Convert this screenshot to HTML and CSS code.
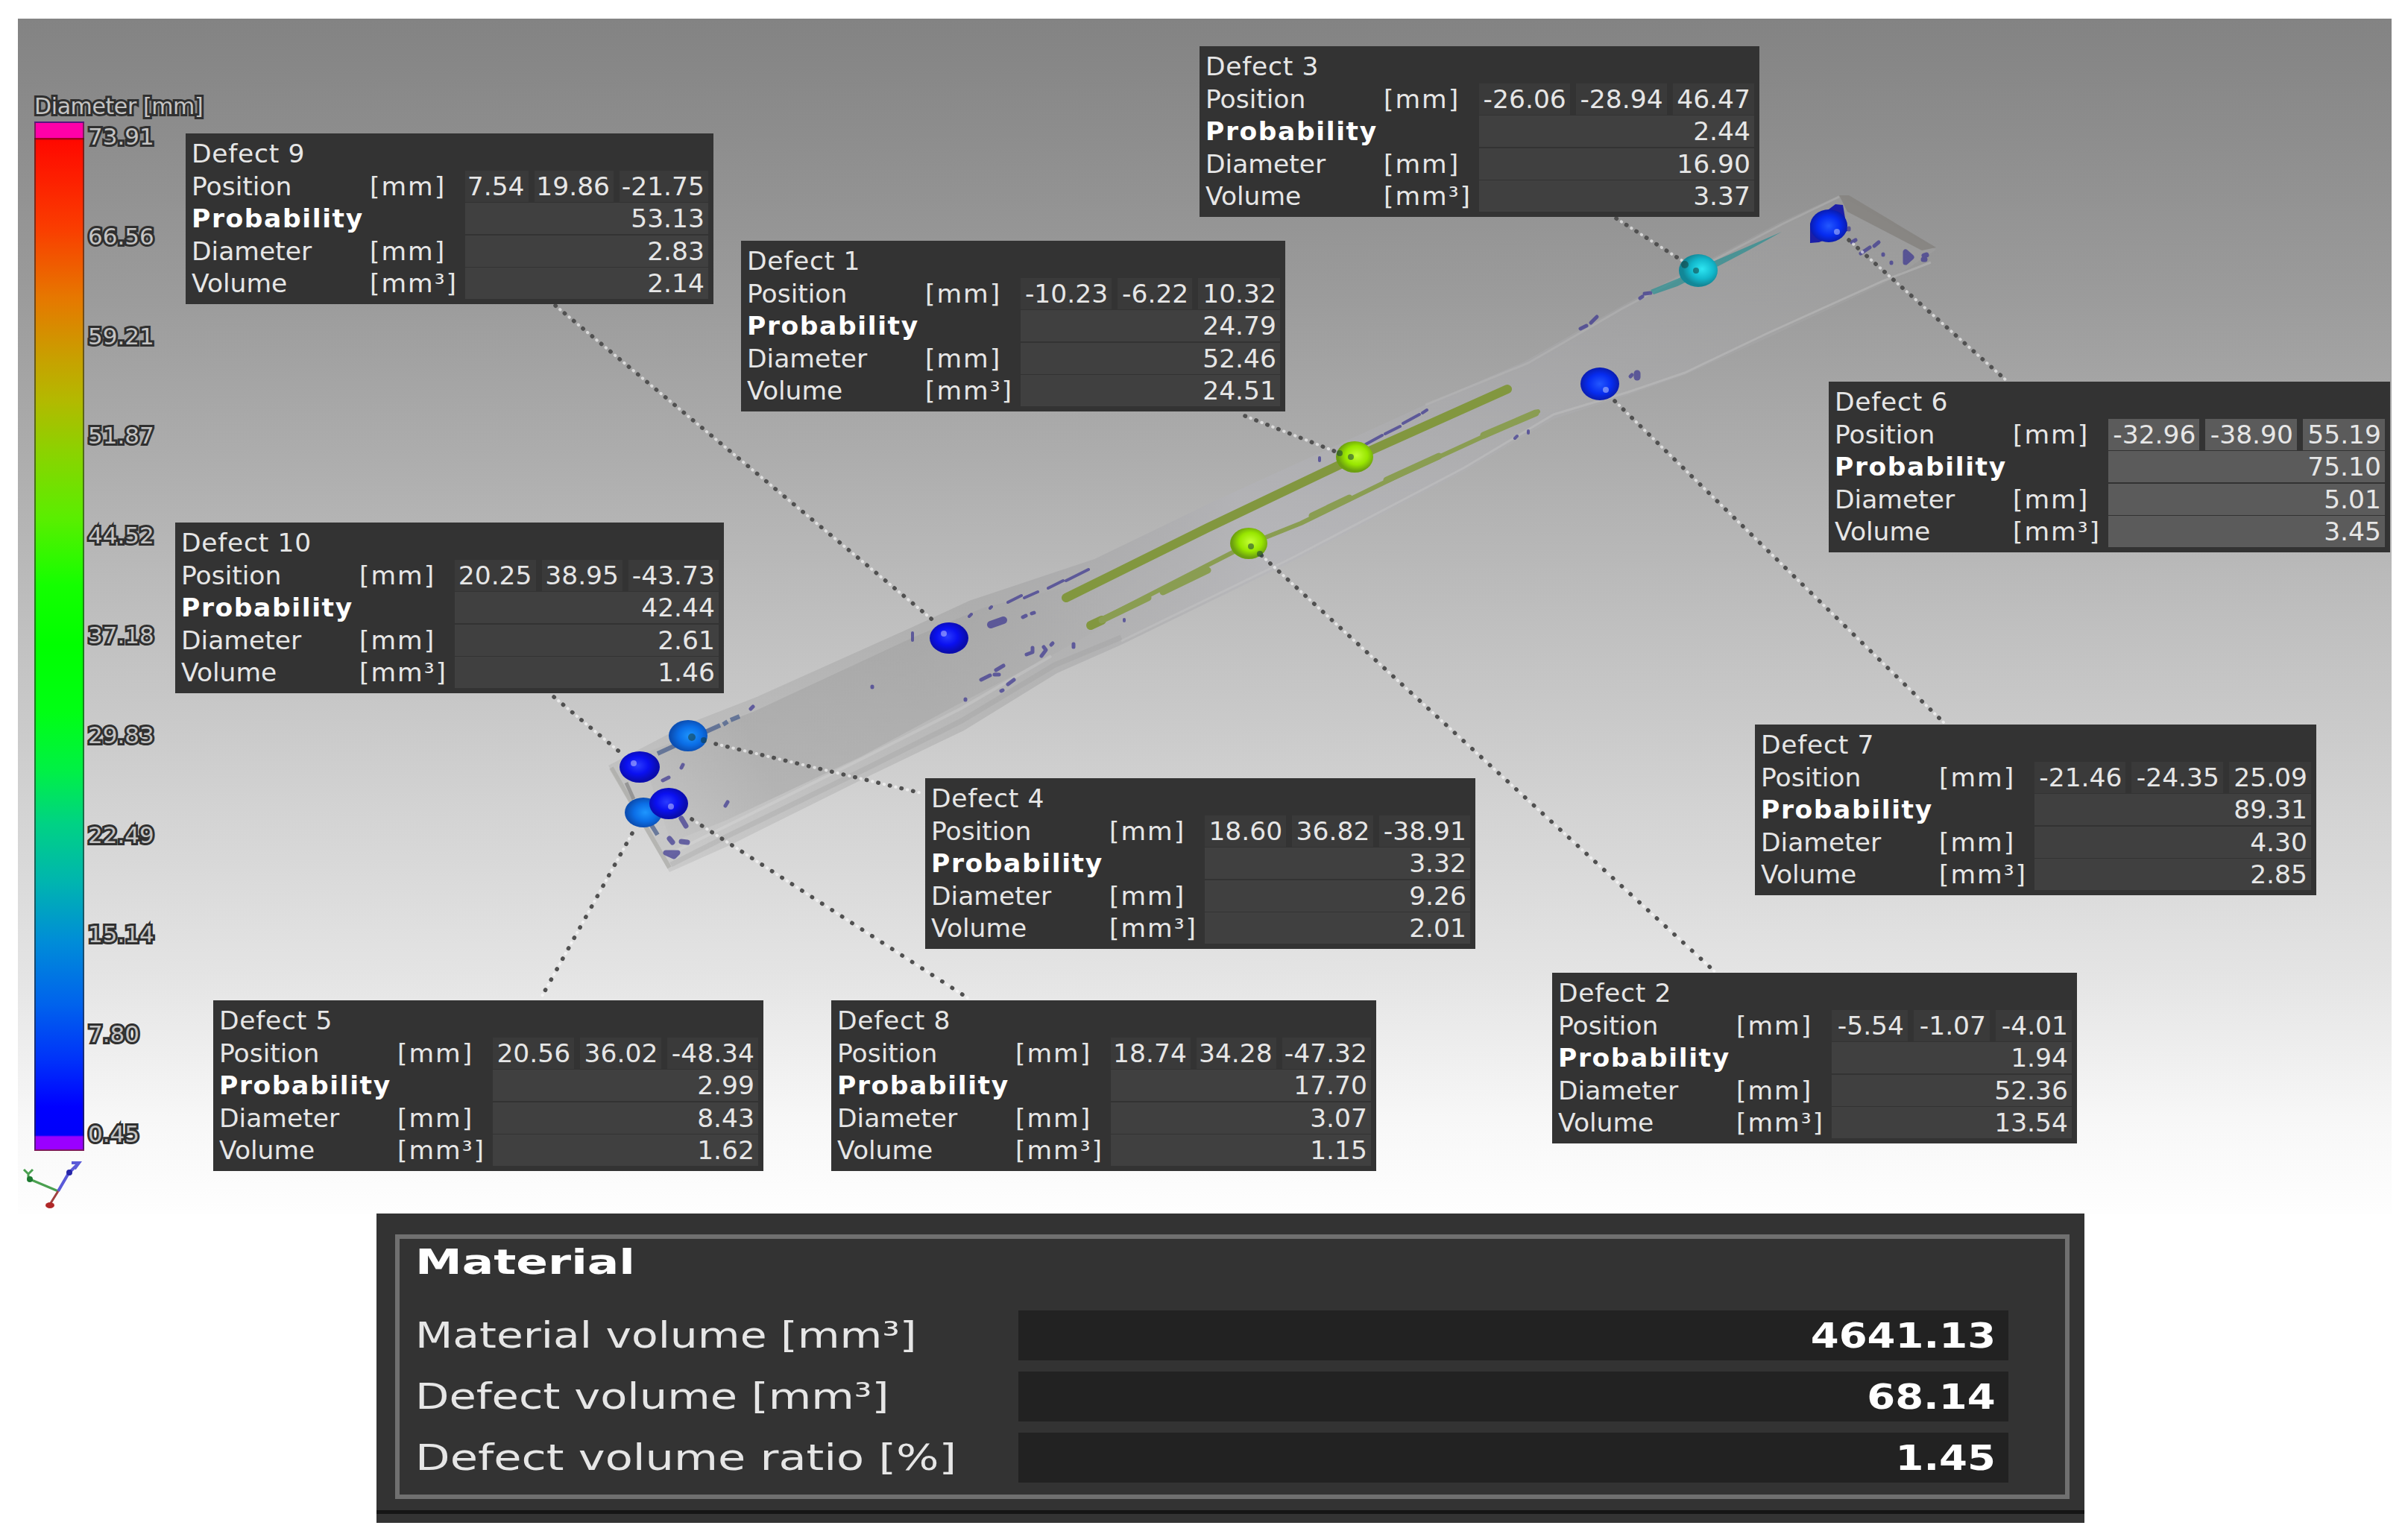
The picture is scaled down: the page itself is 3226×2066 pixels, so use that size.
FILE: index.html
```html
<!DOCTYPE html>
<html lang="en">
<head>
    <meta charset="UTF-8">
    <title>Defect Analysis</title>
    <link rel="stylesheet" href="styles.css">
</head>
<body>
    <div class="viewport">
        <!-- 3D scene -->
        <svg class="scene" viewBox="24 25 3184 1603">
            <defs>
                <linearGradient id="body" gradientUnits="userSpaceOnUse" x1="850" y1="1100" x2="2500" y2="300">
                    <stop offset="0" stop-color="#777" stop-opacity="0.15"/>
                    <stop offset="0.28" stop-color="#777" stop-opacity="0.22"/>
                    <stop offset="0.5" stop-color="#b4b4bc" stop-opacity="0.4"/>
                    <stop offset="1" stop-color="#aaa" stop-opacity="0.25"/>
                </linearGradient>
                <linearGradient id="inner" gradientUnits="userSpaceOnUse" x1="860" y1="1080" x2="1480" y2="790">
                    <stop offset="0" stop-color="#666" stop-opacity="0.02"/>
                    <stop offset="0.25" stop-color="#666" stop-opacity="0.15"/>
                    <stop offset="0.6" stop-color="#666" stop-opacity="0.12"/>
                    <stop offset="1" stop-color="#666" stop-opacity="0"/>
                </linearGradient>
                <radialGradient id="blue" cx="0.45" cy="0.45"><stop offset="0" stop-color="#2a3cff"/><stop offset="0.55" stop-color="#0a10f0"/><stop offset="1" stop-color="#0a0cae"/></radialGradient>
                <radialGradient id="royal" cx="0.5" cy="0.5"><stop offset="0" stop-color="#2358ff"/><stop offset="0.6" stop-color="#062cf0"/><stop offset="1" stop-color="#0a1cb0"/></radialGradient>
                <radialGradient id="sky" cx="0.55" cy="0.5"><stop offset="0" stop-color="#1e96ff"/><stop offset="0.6" stop-color="#0b6ee6"/><stop offset="1" stop-color="#0b4fb4"/></radialGradient>
                <radialGradient id="cyan" cx="0.6" cy="0.45"><stop offset="0" stop-color="#2ee6f2"/><stop offset="0.6" stop-color="#12b8cc"/><stop offset="1" stop-color="#128797"/></radialGradient>
                <radialGradient id="lime" cx="0.55" cy="0.45"><stop offset="0" stop-color="#c4ff35"/><stop offset="0.6" stop-color="#98e600"/><stop offset="1" stop-color="#6c9f10"/></radialGradient>
            </defs>

            <path fill="url(#body)" d="M816 1027 L925 970 L1015 935 L1220 843 L1300 806 L1468 750 L1627 673 L1912 543 L2045 485 L2176 410 L2390 297 L2467 262 L2597 335 L2528 380 L2371 453 L2260 503 L2184 530 L2084 562 L1963 633 L1734 753 L1504 865 L1418 903 L1293 980 L1168 1040 L981 1133 L898 1170 Z"/>
            <path fill="url(#inner)" d="M860 1012 L1010 955 L1225 855 L1320 815 L1480 775 L1500 830 L1400 885 L1285 945 L1155 1015 L975 1100 L900 1130 Z"/>
            <path fill="none" stroke="#999" stroke-opacity="0.25" stroke-width="7" d="M900 1160 L975 1122 L1168 1028 L1290 967 L1415 892 L1504 855"/>
            <path fill="none" stroke="#fff" stroke-opacity="0.14" stroke-width="4" d="M898 1146 L1160 1016 L1290 950 L1410 880"/>
            <path fill="none" stroke="#a2a29c" stroke-opacity="0.5" stroke-width="6" d="M820 1030 L898 1164"/>
            <path fill="none" stroke="#777" stroke-opacity="0.6" stroke-width="5" d="M840 1050 L850 1072"/>
            <path fill="none" stroke="#ccc" stroke-opacity="0.35" stroke-width="3" d="M1504 860 L1734 748 L1963 628 L2084 556 L2184 526 L2260 500 L2371 447 L2528 376 L2590 352"/>
            <path fill="none" stroke="#bbb" stroke-opacity="0.4" stroke-width="3" d="M1912 543 L2050 487 L2176 414 L2390 301 L2467 264"/>
            <path fill="#85837f" fill-opacity="0.85" d="M2467 262 L2480 262 L2597 332 L2578 336 L2478 284 Z"/>

            <!-- pores -->
            <g class="pores">
                <path d="M1224 859 v-10 M1300 827 l3 -3 M1328 816 l2 -2 M1352 808 l18 -9 M1374 802 l18 -8 M1406 789 l20 -10 M1430 779 l30 -15" stroke-width="4"/>
                <path d="M914 1030 l2 -4 M889 1047 l8 -4 M973 1081 l3 -5 M1170 921 v1 M1295 938 v1 M1343 927 l2 -1 M1007 951 l3 -3"/>
                <path d="M1372 828 l4 -2 M1384 823 l3 -1 M1377 878 l8 -3 l0 -6 M1397 880 l6 -8 l-3 -4 M1440 868 v-4 M1410 865 l2 -2"/>
                <path d="M1316 912 l12 -6 M1336 899 l10 -6 M1352 918 l8 -6 M1334 905 h6"/>
                <path d="M1832 596 l22 -12 M1858 582 l20 -10 M1882 568 l22 -12 M1908 554 l6 -4 M2032 588 l3 -3 M2050 581 v-3 M1508 833 v-2 M1770 618 v-4" stroke-width="4"/>
                <path d="M2120 441 l8 -4 M2134 433 l8 -8 M2200 400 l3 -2 M2206 394 l8 -1 M2187 505 l2 -2"/>
                <path d="M2196 501 v5" stroke-width="9"/>
                <path d="M1329 838 L1346 832" stroke-width="10"/>
                <path d="M2480 306 v2 M2484 325 l5 -3 M2496 340 l12 -8 M2514 330 l6 -5 M2526 341 v1 M2537 352 v1"/>
                <path d="M2556 338 v14 l8 -7 z M2581 343 l3 -1 M2580 348 h2" stroke-width="7"/>
                <path d="M898 1125 l4 5 M914 1129 l8 1 M893 1144 l16 0 l-5 5 z" stroke-width="7"/>
                <path d="M914 1098 l6 10" stroke-width="7"/>
            </g>
            <path class="streak" d="M872 1104 L882 1120 M882 1011 L906 1000 M946 982 L966 973 M970 972 L976 968 M980 966 L992 961"/>

            <!-- large voids -->
            <path class="void" stroke-width="12" d="M1430 802 L1620 708 L1817 614 L2022 522"/>
            <path class="void thin" stroke-width="6" d="M1464 838 L1675 730 L1745 702 L1880 636 L2063 552"/>
            <path class="void" stroke-width="12" d="M1463 839 L1478 832"/>
            <path class="void thin" stroke-width="9" d="M1478 832 L1540 802 M1560 794 L1620 765 M1760 692 L1810 668 M1860 644 L1930 612 M1990 584 L2060 554"/>
            <path fill="#2f8f92" fill-opacity="0.75" d="M2214 389 L2250 374 L2300 350 L2390 311 L2345 336 L2305 357 L2250 384 L2218 395 Z"/>

            <!-- leader lines -->
            <g class="leader-back">
                <path d="M745 410 L1255 835"/><path d="M743 935 L835 1012"/><path d="M960 998 L1240 1065"/>
                <path d="M848 1118 L725 1340"/><path d="M928 1099 L1303 1342"/><path d="M1670 558 L1797 608"/>
                <path d="M1692 745 L2303 1306"/><path d="M2168 293 L2260 352"/><path d="M2480 322 L2692 511"/><path d="M2166 538 L2609 971"/>
            </g>
            <g class="leader">
                <path d="M745 410 L1255 835"/><path d="M743 935 L835 1012"/><path d="M960 998 L1240 1065"/>
                <path d="M848 1118 L725 1340"/><path d="M928 1099 L1303 1342"/><path d="M1670 558 L1797 608"/>
                <path d="M1692 745 L2303 1306"/><path d="M2168 293 L2260 352"/><path d="M2480 322 L2692 511"/><path d="M2166 538 L2609 971"/>
            </g>

            <!-- defect markers -->
            <ellipse cx="1273" cy="856" rx="26" ry="21" fill="url(#blue)"/>
            <ellipse cx="923" cy="987" rx="26" ry="21" fill="url(#sky)"/>
            <ellipse cx="858" cy="1029" rx="27" ry="21" fill="url(#blue)"/>
            <ellipse cx="863" cy="1090" rx="25" ry="20" fill="url(#sky)"/>
            <ellipse cx="897" cy="1078" rx="26" ry="21" fill="url(#blue)"/>
            <ellipse cx="1817" cy="613" rx="25" ry="21" fill="url(#lime)"/>
            <ellipse cx="1675" cy="729" rx="25" ry="21" fill="url(#lime)"/>
            <ellipse cx="2278" cy="363" rx="26" ry="22" fill="url(#cyan)"/>
            <path fill="#1c1fa8" d="M2428 300 L2462 274 L2472 275 L2478 310 L2440 325 L2428 326 Z"/>
            <ellipse cx="2453" cy="303" rx="25" ry="22" fill="url(#royal)"/>
            <ellipse cx="2146" cy="515" rx="26" ry="22" fill="url(#royal)"/>
            <g fill="#fff" fill-opacity="0.4">
                <circle cx="1266" cy="850" r="4"/><circle cx="850" cy="1024" r="4"/><circle cx="900" cy="1082" r="4"/>
                <circle cx="2464" cy="311" r="4"/><circle cx="2154" cy="523" r="4"/>
            </g>
            <g fill="#163a3a" fill-opacity="0.55">
                <circle cx="1812" cy="613" r="4"/><circle cx="1678" cy="733" r="4"/><circle cx="928" cy="989" r="5"/><circle cx="944" cy="993" r="4"/>
                <circle cx="2275" cy="363" r="4"/><circle cx="2260" cy="355" r="5"/><circle cx="1797" cy="608" r="4"/><circle cx="1690" cy="743" r="4"/>
            </g>

            <!-- orientation triad -->
            <g fill="none" stroke-width="3">
                <path stroke="#4aa050" d="M78 1598 L40 1582 M32 1569 l6 6 l6 -6 M38 1575 v6"/>
                <path stroke="#5a5ad8" stroke-width="4" d="M78 1598 L92 1574 M94 1572 L104 1562 M96 1560 h10 l-6 8"/>
                <path stroke="#a04040" d="M78 1598 L68 1614"/>
            </g>
            <circle cx="40" cy="1582" r="4" fill="#1d7a30"/>
            <circle cx="93" cy="1573" r="4" fill="#2525a8"/>
            <ellipse cx="67" cy="1617" rx="6" ry="4" fill="#b02828"/>
        </svg>

        <div class="legend">
            <div class="legend-title">Diameter [mm]</div>
            <div class="legend-body">
                <div class="color-bar"></div>
                <div class="ticks">
                    <span>73.91</span><span>66.56</span><span>59.21</span><span>51.87</span><span>44.52</span><span>37.18</span><span>29.83</span><span>22.49</span><span>15.14</span><span>7.80</span><span>0.45</span>
                </div>
            </div>
        </div>

        <div class="card defect-9">
            <div class="name">Defect 9</div>
            <div class="row"><span>Position</span><span class="unit">[mm]</span><div class="xyz"><i>7.54</i><i>19.86</i><i>-21.75</i></div></div>
            <div class="row"><b>Probability</b><span></span><div class="val">53.13</div></div>
            <div class="row"><span>Diameter</span><span class="unit">[mm]</span><div class="val">2.83</div></div>
            <div class="row"><span>Volume</span><span class="unit">[mm³]</span><div class="val">2.14</div></div>
        </div>
        <div class="card defect-10">
            <div class="name">Defect 10</div>
            <div class="row"><span>Position</span><span class="unit">[mm]</span><div class="xyz"><i>20.25</i><i>38.95</i><i>-43.73</i></div></div>
            <div class="row"><b>Probability</b><span></span><div class="val">42.44</div></div>
            <div class="row"><span>Diameter</span><span class="unit">[mm]</span><div class="val">2.61</div></div>
            <div class="row"><span>Volume</span><span class="unit">[mm³]</span><div class="val">1.46</div></div>
        </div>
        <div class="card defect-3">
            <div class="name">Defect 3</div>
            <div class="row"><span>Position</span><span class="unit">[mm]</span><div class="xyz"><i>-26.06</i><i>-28.94</i><i>46.47</i></div></div>
            <div class="row"><b>Probability</b><span></span><div class="val">2.44</div></div>
            <div class="row"><span>Diameter</span><span class="unit">[mm]</span><div class="val">16.90</div></div>
            <div class="row"><span>Volume</span><span class="unit">[mm³]</span><div class="val">3.37</div></div>
        </div>
        <div class="card defect-1">
            <div class="name">Defect 1</div>
            <div class="row"><span>Position</span><span class="unit">[mm]</span><div class="xyz"><i>-10.23</i><i>-6.22</i><i>10.32</i></div></div>
            <div class="row"><b>Probability</b><span></span><div class="val">24.79</div></div>
            <div class="row"><span>Diameter</span><span class="unit">[mm]</span><div class="val">52.46</div></div>
            <div class="row"><span>Volume</span><span class="unit">[mm³]</span><div class="val">24.51</div></div>
        </div>
        <div class="card defect-6 active">
            <div class="name">Defect 6</div>
            <div class="row"><span>Position</span><span class="unit">[mm]</span><div class="xyz"><i>-32.96</i><i>-38.90</i><i>55.19</i></div></div>
            <div class="row"><b>Probability</b><span></span><div class="val">75.10</div></div>
            <div class="row"><span>Diameter</span><span class="unit">[mm]</span><div class="val">5.01</div></div>
            <div class="row"><span>Volume</span><span class="unit">[mm³]</span><div class="val">3.45</div></div>
        </div>
        <div class="card defect-7">
            <div class="name">Defect 7</div>
            <div class="row"><span>Position</span><span class="unit">[mm]</span><div class="xyz"><i>-21.46</i><i>-24.35</i><i>25.09</i></div></div>
            <div class="row"><b>Probability</b><span></span><div class="val">89.31</div></div>
            <div class="row"><span>Diameter</span><span class="unit">[mm]</span><div class="val">4.30</div></div>
            <div class="row"><span>Volume</span><span class="unit">[mm³]</span><div class="val">2.85</div></div>
        </div>
        <div class="card defect-4">
            <div class="name">Defect 4</div>
            <div class="row"><span>Position</span><span class="unit">[mm]</span><div class="xyz"><i>18.60</i><i>36.82</i><i>-38.91</i></div></div>
            <div class="row"><b>Probability</b><span></span><div class="val">3.32</div></div>
            <div class="row"><span>Diameter</span><span class="unit">[mm]</span><div class="val">9.26</div></div>
            <div class="row"><span>Volume</span><span class="unit">[mm³]</span><div class="val">2.01</div></div>
        </div>
        <div class="card defect-5">
            <div class="name">Defect 5</div>
            <div class="row"><span>Position</span><span class="unit">[mm]</span><div class="xyz"><i>20.56</i><i>36.02</i><i>-48.34</i></div></div>
            <div class="row"><b>Probability</b><span></span><div class="val">2.99</div></div>
            <div class="row"><span>Diameter</span><span class="unit">[mm]</span><div class="val">8.43</div></div>
            <div class="row"><span>Volume</span><span class="unit">[mm³]</span><div class="val">1.62</div></div>
        </div>
        <div class="card defect-8">
            <div class="name">Defect 8</div>
            <div class="row"><span>Position</span><span class="unit">[mm]</span><div class="xyz"><i>18.74</i><i>34.28</i><i>-47.32</i></div></div>
            <div class="row"><b>Probability</b><span></span><div class="val">17.70</div></div>
            <div class="row"><span>Diameter</span><span class="unit">[mm]</span><div class="val">3.07</div></div>
            <div class="row"><span>Volume</span><span class="unit">[mm³]</span><div class="val">1.15</div></div>
        </div>
        <div class="card defect-2">
            <div class="name">Defect 2</div>
            <div class="row"><span>Position</span><span class="unit">[mm]</span><div class="xyz"><i>-5.54</i><i>-1.07</i><i>-4.01</i></div></div>
            <div class="row"><b>Probability</b><span></span><div class="val">1.94</div></div>
            <div class="row"><span>Diameter</span><span class="unit">[mm]</span><div class="val">52.36</div></div>
            <div class="row"><span>Volume</span><span class="unit">[mm³]</span><div class="val">13.54</div></div>
        </div>
    </div>

    <div class="material">
        <div class="material-box">
            <h2><span>Material</span></h2>
            <div class="material-row"><label>Material volume [mm³]</label><div class="field"><span>4641.13</span></div></div>
            <div class="material-row"><label class="wide">Defect volume [mm³]</label><div class="field"><span>68.14</span></div></div>
            <div class="material-row"><label class="wider">Defect volume ratio [%]</label><div class="field"><span>1.45</span></div></div>
        </div>
    </div>
</body>
</html>
```
FILE: styles.css
```css
body {
    margin: 0;
    padding-top: 25px;
    background: #fff;
    font-family: "DejaVu Sans", Verdana, sans-serif;
    color: #e6e6e6;
}
.viewport {
    position: relative;
    width: 3184px;
    height: 1603px;
    margin-left: 24px;
    background: linear-gradient(#838383 0, #9b9b9b 23%, #b4b4b4 42%, #c6c6c6 56%, #d4d4d4 67%, #e4e4e4 80%, #f7f7f7 92%, #fefefe 100%);
}
.scene {
    position: absolute;
    left: 0;
    top: 0;
    width: 3184px;
    height: 1603px;
}
.pores {
    fill: none;
    stroke: #3a3590;
    stroke-width: 5;
    stroke-opacity: 0.7;
    stroke-linecap: round;
    stroke-linejoin: round;
}
.streak {
    fill: none;
    stroke: #4a5f8c;
    stroke-width: 6;
    stroke-opacity: 0.75;
}
.void {
    fill: none;
    stroke: #82973f;
    stroke-linecap: round;
    stroke-linejoin: round;
}
.void.thin {
    stroke: #8a9d52;
}
.leader-back {
    fill: none;
    stroke: #fff;
    stroke-opacity: 0.6;
    stroke-width: 4;
    stroke-linecap: round;
    stroke-dasharray: 0.5 15.5;
    stroke-dashoffset: -8;
}
.leader {
    fill: none;
    stroke: #505050;
    stroke-width: 5.5;
    stroke-linecap: round;
    stroke-dasharray: 0.5 15.5;
}

/* Color scale */
.legend {
    position: relative;
    width: 260px;
    padding: 98px 0 0 22px;
    font-size: 31px;
    color: #c4c4c4;
    -webkit-text-stroke: 6px #303030;
    paint-order: stroke fill;
}
.legend-title {
    height: 40px;
    line-height: 40px;
    font-size: 30px;
    letter-spacing: -0.4px;
    white-space: nowrap;
}
.legend-body {
    display: flex;
    gap: 5px;
}
.color-bar {
    box-sizing: border-box;
    width: 67px;
    height: 1381px;
    border: 2px solid rgba(40, 40, 40, 0.6);
    background: linear-gradient(#ff00a8 0 20px, #a00020 20px 22px, #ff0800 23px, #fa3c00 140px, #e67800 235px, #c8a000 315px, #b4b800 370px, #8cd200 440px, #5aee00 530px, #14ff00 620px, #00ff00 700px, #00ff14 790px, #00f046 870px, #00d284 940px, #00b4b0 1020px, #008cd8 1100px, #0064ec 1180px, #0030fa 1260px, #0000ff 1320px, #0000fa 1358px, #9a00ff 1360px);
}
.ticks {
    display: flex;
    flex-direction: column;
    height: 1374px;
}
.ticks span {
    height: 40px;
    line-height: 40px;
    margin-bottom: 93.8px;
}

/* Defect cards */
.card {
    position: absolute;
    box-sizing: border-box;
    height: 229px;
    padding: 6px 7px 0 8px;
    background: #333;
    font-size: 34.5px;
    line-height: 42px;
    white-space: nowrap;
}
.name {
    height: 43.5px;
    letter-spacing: 0.7px;
}
.row {
    display: grid;
    grid-template-columns: 239px 128px 1fr;
    height: 43.5px;
}
.row b {
    color: #fff;
    letter-spacing: 1.6px;
}
.unit {
    letter-spacing: 2px;
}
.xyz {
    display: flex;
    justify-content: space-between;
    gap: 8px;
}
.xyz i {
    flex: 1 1 auto;
    height: 42px;
    padding-right: 5px;
    background: #3a3a3a;
    font-style: normal;
    text-align: right;
}
.val {
    height: 42px;
    padding-right: 5px;
    background: #404040;
    text-align: right;
}
.active .val,
.active .xyz i {
    background: #5b5b5b;
}
.defect-9 { left: 225px; top: 154px; width: 708px; }
.defect-10 { left: 211px; top: 676px; width: 736px; }
.defect-3 { left: 1585px; top: 37px; width: 751px; }
.defect-1 { left: 970px; top: 298px; width: 730px; }
.defect-6 { left: 2429px; top: 487px; width: 753px; }
.defect-7 { left: 2330px; top: 947px; width: 753px; }
.defect-4 { left: 1217px; top: 1019px; width: 738px; }
.defect-5 { left: 262px; top: 1317px; width: 738px; }
.defect-8 { left: 1091px; top: 1317px; width: 731px; }
.defect-2 { left: 2058px; top: 1280px; width: 704px; }

/* Material summary */
.material {
    box-sizing: border-box;
    width: 2291px;
    height: 415px;
    margin-left: 505px;
    padding: 28px 20px 0 25px;
    background: linear-gradient(#333 0 398px, #151515 398px 403px, #333 403px);
}
.material-box {
    box-sizing: border-box;
    height: 355px;
    padding: 0 76px 0 21px;
    border: 6px solid #707070;
    background: #333;
}
.material h2 {
    height: 96px;
    margin: 0;
    color: #fff;
    font-size: 46px;
    line-height: 62px;
}
.material h2 span {
    display: inline-block;
    transform: scaleX(1.37);
    transform-origin: left center;
}
.material-row {
    display: flex;
    justify-content: space-between;
    margin-bottom: 15px;
    font-size: 48px;
    line-height: 67px;
    white-space: nowrap;
}
.material-row label {
    transform: scaleX(1.215);
    transform-origin: left center;
}
.material-row label.wide {
    transform: scaleX(1.23);
}
.material-row label.wider {
    transform: scaleX(1.262);
}
.field {
    box-sizing: border-box;
    width: 1328px;
    height: 67px;
    padding-right: 17px;
    background: #222;
    color: #fff;
    font-weight: bold;
    text-align: right;
}
.field span {
    display: inline-block;
    font-size: 47px;
    transform: scaleX(1.16);
    transform-origin: right center;
}
```
